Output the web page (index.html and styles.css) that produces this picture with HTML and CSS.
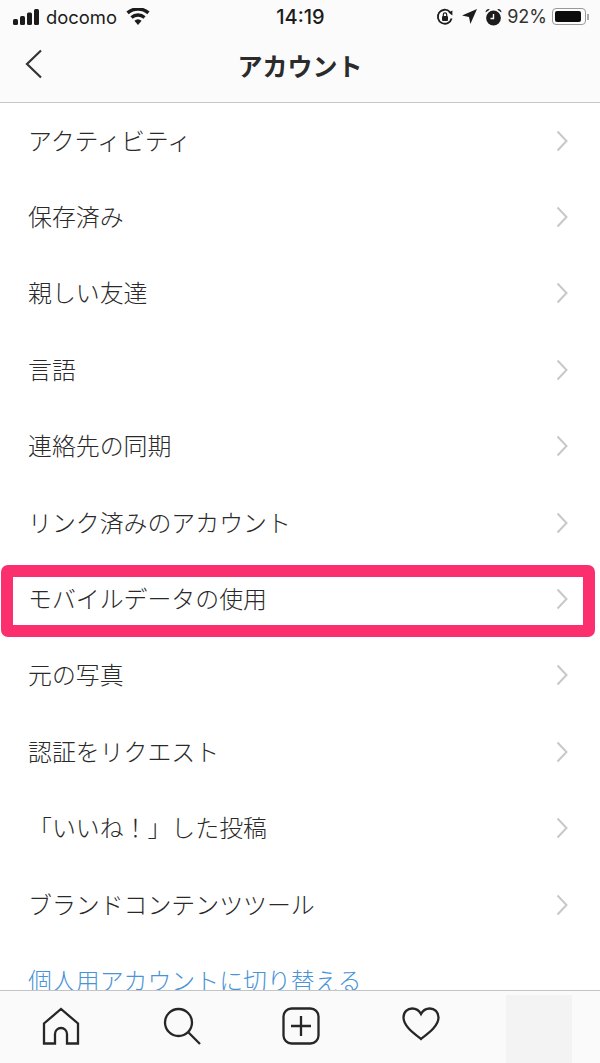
FILE: index.html
```html
<!DOCTYPE html>
<html lang="ja">
<head>
  <meta charset="UTF-8" />
  <title>アカウント</title>
  <link rel="stylesheet" href="styles.css">
</head>
<body>
  <div class="phone">
    <!-- Status bar -->
    <div class="status">
      <div class="status-left">
        <svg class="signal" width="27" height="16" viewBox="0 0 27 16"><rect x="0" y="10" width="5" height="6" rx="1.5"/><rect x="7" y="7" width="5" height="9" rx="1.5"/><rect x="14" y="3.5" width="5" height="12.5" rx="1.5"/><rect x="21" y="0" width="5" height="16" rx="1.5"/></svg>
        <span class="carrier">docomo</span>
        <svg class="wifi" width="24" height="17" viewBox="0 0 24 17"><path d="M12 17l-3.6-4.2a5.4 5.4 0 0 1 7.2 0z"/><path d="M6.6 10.7L4.4 8.2a11.6 11.6 0 0 1 15.2 0l-2.2 2.500a8.3 8.3 0 0 0-10.800 0z"/><path d="M2.7 6.2L.4 3.6a17.6 17.6 0 0 1 23.2 0l-2.300 2.600a14.2 14.2 0 0 0-18.600 0z"/></svg>
      </div>
      <div class="status-time">14:19</div>
      <div class="status-right">
        <svg width="18" height="18" viewBox="0 0 18 18"><path class="line" d="M15.6 10.5A7 7 0 1 1 14 4"/><path d="M12.4 4.6l4-2v5z"/><rect x="6" y="8" width="6" height="5" rx="1"/><path class="line thin" d="M7.3 8V6.6a1.7 1.7 0 0 1 3.4 0V8"/></svg>
        <svg width="15" height="15" viewBox="0 0 15 15"><path d="M15 0L8.4 15 7 8 0 6.6z"/></svg>
        <svg width="17" height="18" viewBox="0 0 17 18"><circle cx="8.5" cy="10" r="7.4"/><path d="M.6 4.6a3 3 0 0 1 4.2-3.2zM16.4 4.6a3 3 0 0 0-4.2-3.2z"/><path class="line cut" d="M8.5 6v4.5H5.5"/></svg>
        <span class="percent">92%</span>
        <div class="battery"><div class="battery-fill"></div></div>
        <div class="battery-nub"></div>
      </div>
    </div>

    <!-- Nav -->
    <div class="nav">
      <svg class="back" width="18" height="30" viewBox="0 0 18 30"><path d="M16 1.5L2 15l14 13.5"/></svg>
      <div class="nav-title">アカウント</div>
    </div>

    <!-- Settings rows -->
    <div class="list">
      <div class="row"><span>アクティビティ</span><svg class="chev" width="12" height="22" viewBox="0 0 12 22"><path d="M1.5 1.500L10.500 11l-9 9.500"/></svg></div>
      <div class="row"><span>保存済み</span><svg class="chev" width="12" height="22" viewBox="0 0 12 22"><path d="M1.5 1.500L10.500 11l-9 9.500"/></svg></div>
      <div class="row"><span>親しい友達</span><svg class="chev" width="12" height="22" viewBox="0 0 12 22"><path d="M1.5 1.500L10.500 11l-9 9.500"/></svg></div>
      <div class="row"><span>言語</span><svg class="chev" width="12" height="22" viewBox="0 0 12 22"><path d="M1.5 1.500L10.500 11l-9 9.500"/></svg></div>
      <div class="row"><span>連絡先の同期</span><svg class="chev" width="12" height="22" viewBox="0 0 12 22"><path d="M1.5 1.500L10.500 11l-9 9.500"/></svg></div>
      <div class="row"><span>リンク済みのアカウント</span><svg class="chev" width="12" height="22" viewBox="0 0 12 22"><path d="M1.5 1.500L10.500 11l-9 9.500"/></svg></div>
      <div class="row row-marked"><span>モバイルデータの使用</span><svg class="chev" width="12" height="22" viewBox="0 0 12 22"><path d="M1.5 1.500L10.500 11l-9 9.500"/></svg><div class="marker"></div></div>
      <div class="row"><span>元の写真</span><svg class="chev" width="12" height="22" viewBox="0 0 12 22"><path d="M1.5 1.500L10.500 11l-9 9.500"/></svg></div>
      <div class="row"><span>認証をリクエスト</span><svg class="chev" width="12" height="22" viewBox="0 0 12 22"><path d="M1.5 1.500L10.500 11l-9 9.500"/></svg></div>
      <div class="row"><span>「いいね！」した投稿</span><svg class="chev" width="12" height="22" viewBox="0 0 12 22"><path d="M1.5 1.500L10.500 11l-9 9.500"/></svg></div>
      <div class="row"><span>ブランドコンテンツツール</span><svg class="chev" width="12" height="22" viewBox="0 0 12 22"><path d="M1.5 1.500L10.500 11l-9 9.500"/></svg></div>
      <div class="row row-link"><span>個人用アカウントに切り替える</span></div>
    </div>

    <!-- Tab bar -->
    <div class="tabs">
      <div class="tab"><svg width="38" height="38" viewBox="0 0 38 38"><path d="M2 36.500V16.500L19 2l17 14.500v20H25V27a6 6 0 0 0-12 0v9.500z"/></svg></div>
      <div class="tab"><svg width="38" height="38" viewBox="0 0 38 38"><circle cx="15.500" cy="15.500" r="13.500"/><path d="M25.500 25.500L37 37"/></svg></div>
      <div class="tab"><svg width="38" height="38" viewBox="0 0 38 38"><rect x="1.500" y="1.500" width="35" height="35" rx="8"/><path d="M19 9v20M9 19h20"/></svg></div>
      <div class="tab"><svg width="38" height="34" viewBox="0 0 38 34"><path d="M19 32C10 25 1.500 18.500 1.500 10.500 1.500 5 5.500 1.500 10.200 1.500c3.800 0 7 2 8.800 5.500 1.800-3.500 5-5.500 8.800-5.500 4.700 0 8.700 3.500 8.700 9C36.500 18.500 28 25 19 32z"/></svg></div>
      <div class="tab tab-avatar"><div class="avatar"></div></div>
    </div>
  </div>
</body>
</html>
```

FILE: styles.css
```css
* { box-sizing: border-box; margin: 0; padding: 0; }
body {
  font-family: 'Noto Sans CJK JP', 'Noto Sans', sans-serif;
  background: #fff;
  overflow: hidden;
}

.phone {
  width: 600px;
  height: 1063px;
  display: flex;
  flex-direction: column;
  overflow: hidden;
}

/* Status bar */
.status {
  height: 33px;
  background: #fbfbfb;
  display: grid;
  grid-template-columns: 1fr auto 1fr;
  align-items: center;
  padding: 0 11px 0 13px;
  color: #1c1c1c;
  font-family: Inter, 'Liberation Sans', sans-serif;
  font-size: 18.400px;
}
.status svg { fill: #1c1c1c; display: block; }
.status-left { display: flex; align-items: center; }
.carrier { margin-left: 6px; }
.wifi { margin-left: 9px; }
.status-time { font-weight: 500; font-size: 20px; margin-right: 1px; }
.status-right { display: flex; align-items: center; justify-content: flex-end; gap: 8px; }
.status svg .line { fill: none; stroke: #1c1c1c; stroke-width: 1.8; }
.status svg .thin { stroke-width: 1.2; }
.status svg .cut { stroke: #fbfbfb; stroke-width: 1.4; }
.percent { margin-left: -3px; margin-right: -3px; color: #333; font-size: 18px; }
.battery {
  width: 34px;
  height: 17px;
  border: 1.5px solid #999;
  border-radius: 4px;
  padding: 2px;
}
.battery-fill { width: 92%; height: 100%; background: #0c0c0c; border-radius: 2px; }
.battery-nub { width: 2px; height: 6px; background: #aaa; margin-left: -7px; }

/* Nav */
.nav {
  height: 70px;
  background: #fbfbfb;
  border-bottom: 1px solid #c6c6c6;
  display: flex;
  align-items: center;
  justify-content: center;
  position: relative;
  padding-bottom: 6px;
}
.back {
  position: absolute;
  left: 25px;
  top: 16px;
  fill: none;
  stroke: #333;
  stroke-width: 2.2;
}
.nav-title { font-size: 25px; font-weight: 700; color: #2b2b2b; }

/* List */
.list { flex: 1; overflow: hidden; background: #fff; }
.row {
  height: 76.4px;
  padding: 0 32px 0 28px;
  display: flex;
  align-items: center;
  justify-content: space-between;
  position: relative;
  font-size: 23.9px;
  font-weight: 300;
  color: #2a2a2a;
  white-space: nowrap;
}
.row span { padding-bottom: 4px; }
.chev { fill: none; stroke: #c8c8c8; stroke-width: 2; margin-bottom: 1px; }
.row-link { color: #4a94d6; }

/* the pink box sits on top of its row */
.marker {
  position: absolute;
  left: 1px;
  top: 4px;
  width: 594px;
  height: 72px;
  border: 12px solid #fb2f6e;
  border-radius: 7px;
}

/* Tab bar */
.tabs {
  height: 73px;
  background: #fafafa;
  border-top: 1px solid #c4c4c4;
  display: grid;
  grid-template-columns: 122px 119px 120px 119px 120px;
}
.tab { display: flex; justify-content: center; padding-top: 16px; }
.tab svg { fill: none; stroke: #262626; stroke-width: 2.3; }
.tab-avatar { padding-top: 4px; justify-content: flex-start; padding-left: 26px; }
.avatar { width: 66px; height: 68px; background: #f3f3f3; }
```
